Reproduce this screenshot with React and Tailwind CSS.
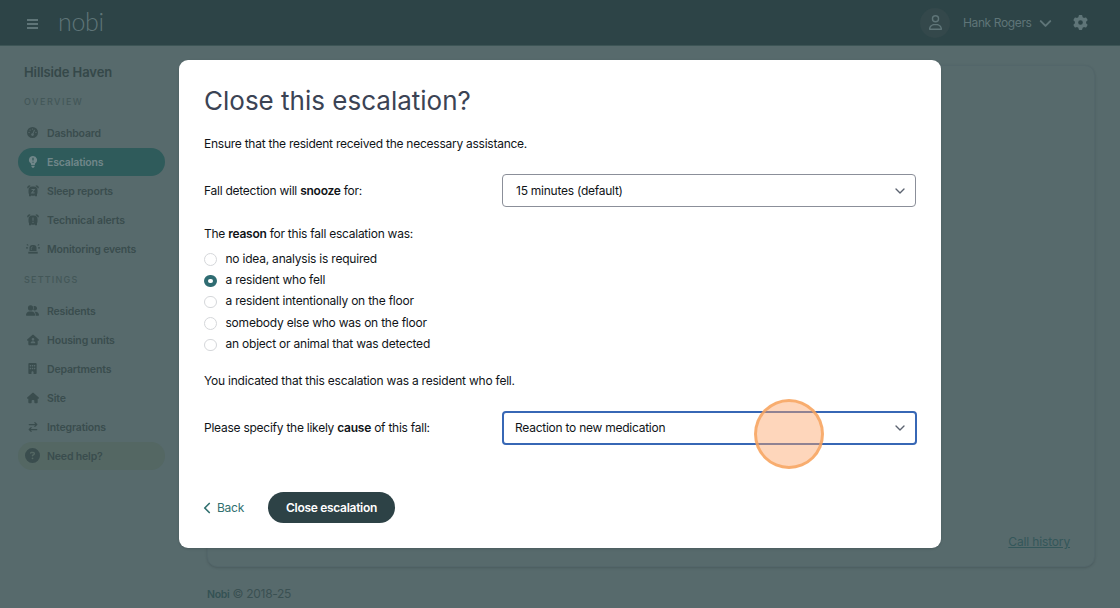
import { FaArrowRightArrowLeft, FaBuilding, FaCircleQuestion, FaGaugeHigh, FaGear, FaHouse, FaHouseUser, FaRegUser, FaUserGroup } from "react-icons/fa6";
import { ChevronDown, ChevronLeft } from "lucide-react";

// Bulb with a cut-out exclamation mark
function EscalationIcon() {
  return (
    <svg viewBox="0 0 12 12" className="size-3">
      <path d="M6 0a4 4 0 0 0-2.3 7.3l.6 1.9h3.4l.6-1.9A4 4 0 0 0 6 0Z" fill="currentColor" />
      <path d="M4.400 10h3.200c0 1.100-.7 1.800-1.600 1.800S4.400 11.100 4.400 10Z" fill="currentColor" />
      <path d="M6 1.800v2.600M6 5.700v1" stroke="#2f5758" strokeWidth="1.200" />
    </svg>
  );
}

// Alarm clock, the face holds either a "z" or an exclamation mark
function AlarmIcon({ mark }) {
  return (
    <svg viewBox="0 0 12 12" className="size-3" fill="none">
      <rect x="1.500" y="1.600" width="9" height="9.200" rx="3.800" fill="currentColor" />
      <path d="M.8 3.200C.8 1.700 1.800.8 3.200.8M11.200 3.200C11.200 1.700 10.200.8 8.800.8" stroke="currentColor" strokeWidth="1.300" />
      <path d="M2 8.500h2v2.800H2ZM8 8.500h2v2.800H8Z" fill="currentColor" />
      <path d={mark} stroke="#576a6c" strokeWidth="1.100" />
    </svg>
  );
}

function SirenIcon() {
  return (
    <svg viewBox="0 0 14 12" className="h-3 w-3.5" fill="none">
      <path d="M3.500 8V5a3 3 0 0 1 3-3h1a3 3 0 0 1 3 3v3Z" fill="currentColor" />
      <path d="M2.300 8.800h9.400v1.800H2.300Z" fill="currentColor" />
      <path d="M5.300 7V5.200c0-.9.5-1.400 1.400-1.400" stroke="#576a6c" strokeWidth=".7" />
      <path d="M0 4.900h2M12 4.900h2M.8 1.500l1.500.9M13.200 1.500l-1.500.9" stroke="currentColor" strokeWidth="1.100" />
    </svg>
  );
}

const overview = [
  { label: "Dashboard", icon: <FaGaugeHigh className="size-[11px]" /> },
  { label: "Escalations", icon: <EscalationIcon />, active: true },
  { label: "Sleep reports", icon: <AlarmIcon mark="M4.500 4.500h2.800L4.700 7.900h2.900" /> },
  { label: "Technical alerts", icon: <AlarmIcon mark="M6 3.600v3.100M6 7.800v1.100" /> },
  { label: "Monitoring events", icon: <SirenIcon /> },
];

const settings = [
  { label: "Residents", icon: <FaUserGroup className="size-[13px]" /> },
  { label: "Housing units", icon: <FaHouseUser className="size-3" /> },
  { label: "Departments", icon: <FaBuilding className="size-[11px]" /> },
  { label: "Site", icon: <FaHouse className="size-3" /> },
  { label: "Integrations", icon: <FaArrowRightArrowLeft className="size-[10px]" /> },
  { label: "Need help?", icon: <FaCircleQuestion className="size-[15px]" />, help: true },
];

const reasons = [
  "no idea, analysis is required",
  "a resident who fell",
  "a resident intentionally on the floor",
  "somebody else who was on the floor",
  "an object or animal that was detected",
];

function NavItem({ item }) {
  let tone = "text-[#3a4d4e]";
  if (item.active) tone = "bg-[#2f5b5b] text-[#71878a]";
  if (item.help) tone = "bg-[#546763] text-[#3a4d4e]";
  return (
    <a className={`mb-px flex h-7 w-[147px] items-center rounded-full pl-[7px] ${tone}`}>
      <span className="-mt-px flex w-[15px] justify-center">{item.icon}</span>
      <span className="mt-px ml-[7px] whitespace-nowrap text-[10.5px] font-semibold tracking-[-0.16px]">{item.label}</span>
    </a>
  );
}

function Header() {
  return (
    <header className="flex h-[46px] shrink-0 items-center border-b border-[#3d5556] bg-[#2d4447] text-[#5f7578]">
      <div className="mt-[3px] ml-[27px] flex w-[11px] flex-col gap-0.5">
        <div className="h-0.5 bg-[#5f7578]" />
        <div className="h-0.5 bg-[#5f7578]" />
        <div className="h-0.5 bg-[#5f7578]" />
      </div>
      <div className="-mt-0.5 ml-5 font-['Lato'] text-[25px] leading-none font-light tracking-[-0.3px]">nobi</div>
      <div className="ml-auto flex items-center pr-8">
        <div className="flex size-[30px] items-center justify-center rounded-full bg-[#34484b]">
          <FaRegUser className="size-[15px]" />
        </div>
        <span className="mt-px ml-[13px] w-[68px] whitespace-nowrap text-[12px] tracking-[-0.38px]">Hank Rogers</span>
        <ChevronDown className="mt-px ml-[5px] size-[19px]" strokeWidth={2.5} />
        <FaGear className="ml-[18px] size-[15px]" />
      </div>
    </header>
  );
}

function Sidebar() {
  return (
    <aside className="w-[207px] shrink-0 pl-[18px]">
      <div className="mt-[17px] ml-1.5 h-[18px] text-[13px] leading-[18px] font-semibold tracking-[-0.1px] text-[#354849]">Hillside Haven</div>
      <div className="mt-[13px] ml-1.5 h-4 text-[9px] leading-4 font-medium tracking-[1.500px] text-[#435758]">OVERVIEW</div>
      <nav className="mt-[9px]">
        {overview.map((item) => <NavItem key={item.label} item={item} />)}
      </nav>
      <div className="mt-[9px] ml-1.5 h-4 text-[9px] leading-4 font-medium tracking-[1.200px] text-[#435758]">SETTINGS</div>
      <nav className="mt-[9px]">
        {settings.map((item) => <NavItem key={item.label} item={item} />)}
      </nav>
    </aside>
  );
}

function SelectBox({ value, focused }) {
  return (
    <button
      className={`flex items-center justify-between rounded-[4px] text-left ${
        focused ? "-mr-px h-[34px] w-[415px] border-2 border-[#3767b5] pr-[7px] pl-[11px]" : "h-[33px] w-[414px] border border-[#8b8f99] pr-[7px] pl-[13px]"
      }`}
    >
      <span>{value}</span>
      <ChevronDown className="size-4 text-[#5b6370]" strokeWidth={2} />
    </button>
  );
}

function CloseDialog() {
  return (
    <div role="dialog" className="relative h-[488px] w-[762px] rounded-[9px] bg-white px-[25px] text-[12px] tracking-[-0.25px] text-[#101418] shadow-sm">
      <h1 className="mt-[23px] h-9 text-[26px] leading-9 tracking-normal text-[#3b4354]">Close this escalation?</h1>
      <p className="mt-4 h-[18px] leading-[18px]">Ensure that the resident received the necessary assistance.</p>
      <div className="mt-[21px] flex h-[33px] items-center justify-between">
        <span>Fall detection will <b className="font-semibold">snooze</b> for:</span>
        <SelectBox value="15 minutes (default)" />
      </div>
      <p className="mt-[18px] h-[18px] leading-[18px]">The <b className="font-semibold">reason</b> for this fall escalation was:</p>
      <div className="mt-[5px]">
        {reasons.map((reason, i) => (
          <label key={reason} className="flex h-[21.300px] items-center">
            <span className={`mt-0.5 size-[12.500px] shrink-0 rounded-full ${i === 1 ? "border-4 border-[#2f6c72]" : "border border-[#d5d7da]"}`} />
            <span className="ml-[9px] tracking-[-0.22px]">{reason}</span>
          </label>
        ))}
      </div>
      <p className="mt-[18px] h-[18px] leading-[18px] tracking-[-0.22px]">You indicated that this escalation was a resident who fell.</p>
      <div className="mt-[21px] flex h-[34px] items-center justify-between">
        <span>Please specify the likely <b className="font-semibold">cause</b> of this fall:</span>
        <SelectBox value="Reaction to new medication" focused />
      </div>
      <div className="mt-[47px] flex h-[31px] items-center">
        <button className="flex w-16 items-center text-[#31706f]">
          <ChevronLeft className="-ml-1.5 size-[18px]" strokeWidth={2.2} />
          <span className="ml-px">Back</span>
        </button>
        <button className="h-[31px] w-[127px] rounded-full bg-[#2d4246] font-semibold tracking-[-0.3px] whitespace-nowrap text-white">Close escalation</button>
      </div>
      {/* Click highlight */}
      <div className="absolute top-[339px] left-[575px] size-[70px] rounded-full border-[3px] border-[#f6a35c]/80 bg-[#fca468]/45" />
    </div>
  );
}

export default function App() {
  return (
    <div className="relative flex h-[608px] w-[1120px] flex-col overflow-hidden bg-[#576a6c] font-['Inter',sans-serif]">
      <Header />
      <div className="flex min-h-0 flex-1">
        <Sidebar />
        <main className="flex flex-1 flex-col pt-[19px] pr-[25px]">
          <div className="flex h-[502px] shrink-0 items-end justify-end rounded-[10px] border border-[#53666a] bg-[#576a6c] pr-6 pb-[15px] shadow-sm">
            <a className="text-[12px] tracking-[-0.15px] text-[#34575a] underline">Call history</a>
          </div>
          <footer className="mt-[18px] text-[12px] leading-[18px] tracking-[-0.3px] text-[#3a5052]">
            <span className="text-[10.5px] font-semibold text-[#345254]">Nobi</span> © 2018-25
          </footer>
        </main>
      </div>
      <div className="absolute inset-0 flex items-center justify-center">
        <CloseDialog />
      </div>
    </div>
  );
}
